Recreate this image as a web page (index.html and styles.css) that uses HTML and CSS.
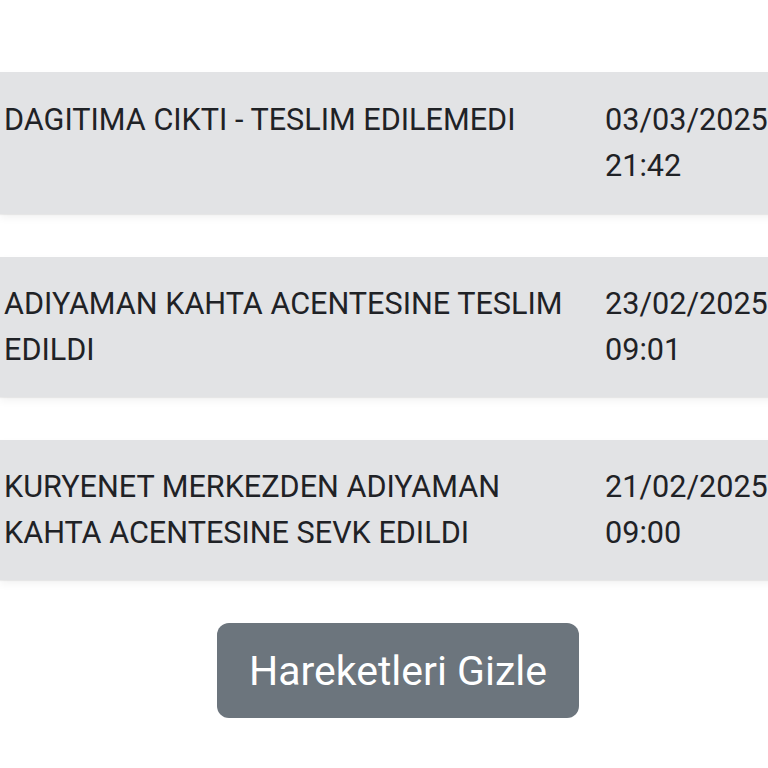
FILE: index.html
```html
<!DOCTYPE html>
<html lang="tr">
  <head>
    <meta charset="UTF-8" />
    <meta name="viewport" content="width=device-width, initial-scale=1.0" />
    <title>Kargo Hareketleri</title>
    <link rel="stylesheet" href="styles.css">
  </head>
  <body>
    <div class="tracking">
      <!-- shipment movements -->
      <div class="move">
        <div class="move-desc">DAGITIMA CIKTI - TESLIM EDILEMEDI</div>
        <div class="move-date">03/03/2025<br />21:42</div>
      </div>
      <div class="move">
        <div class="move-desc">ADIYAMAN KAHTA ACENTESINE TESLIM EDILDI</div>
        <div class="move-date">23/02/2025<br />09:01</div>
      </div>
      <div class="move">
        <div class="move-desc">KURYENET MERKEZDEN ADIYAMAN KAHTA ACENTESINE SEVK EDILDI</div>
        <div class="move-date">21/02/2025<br />09:00</div>
      </div>

      <div class="actions">
        <button class="btn-toggle" type="button">Hareketleri Gizle</button>
      </div>
    </div>
  </body>
</html>
```

FILE: styles.css
```css
html,
body {
  margin: 0;
  padding: 0;
  background: #fff;
  overflow: hidden;
}

body {
  font-family: Roboto, "Noto Sans", Arial, sans-serif;
  color: #1f2226;
}

.tracking {
  width: 796px;
  padding-top: 72px;
  display: flex;
  flex-direction: column;
  gap: 43px;
}

.move {
  display: grid;
  grid-template-columns: 575px 1fr;
  column-gap: 26px;
  padding: 24px 0 24px 4px;
  background: #e2e3e5;
  box-shadow: 0 1px 1px rgba(0, 0, 0, 0.06), 0 4px 8px rgba(0, 0, 0, 0.05);
  font-size: 30.6px;
  line-height: 46px;
}

.move:first-child {
  padding-top: 25px;
  padding-bottom: 25px;
}

.move-date {
  white-space: nowrap;
}

.actions {
  display: flex;
  justify-content: center;
}

.btn-toggle {
  width: 362px;
  height: 95px;
  border: none;
  border-radius: 12px;
  background: #6c757d;
  color: #fff;
  font-family: Roboto, "Noto Sans", Arial, sans-serif;
  font-size: 41px;
}
```
